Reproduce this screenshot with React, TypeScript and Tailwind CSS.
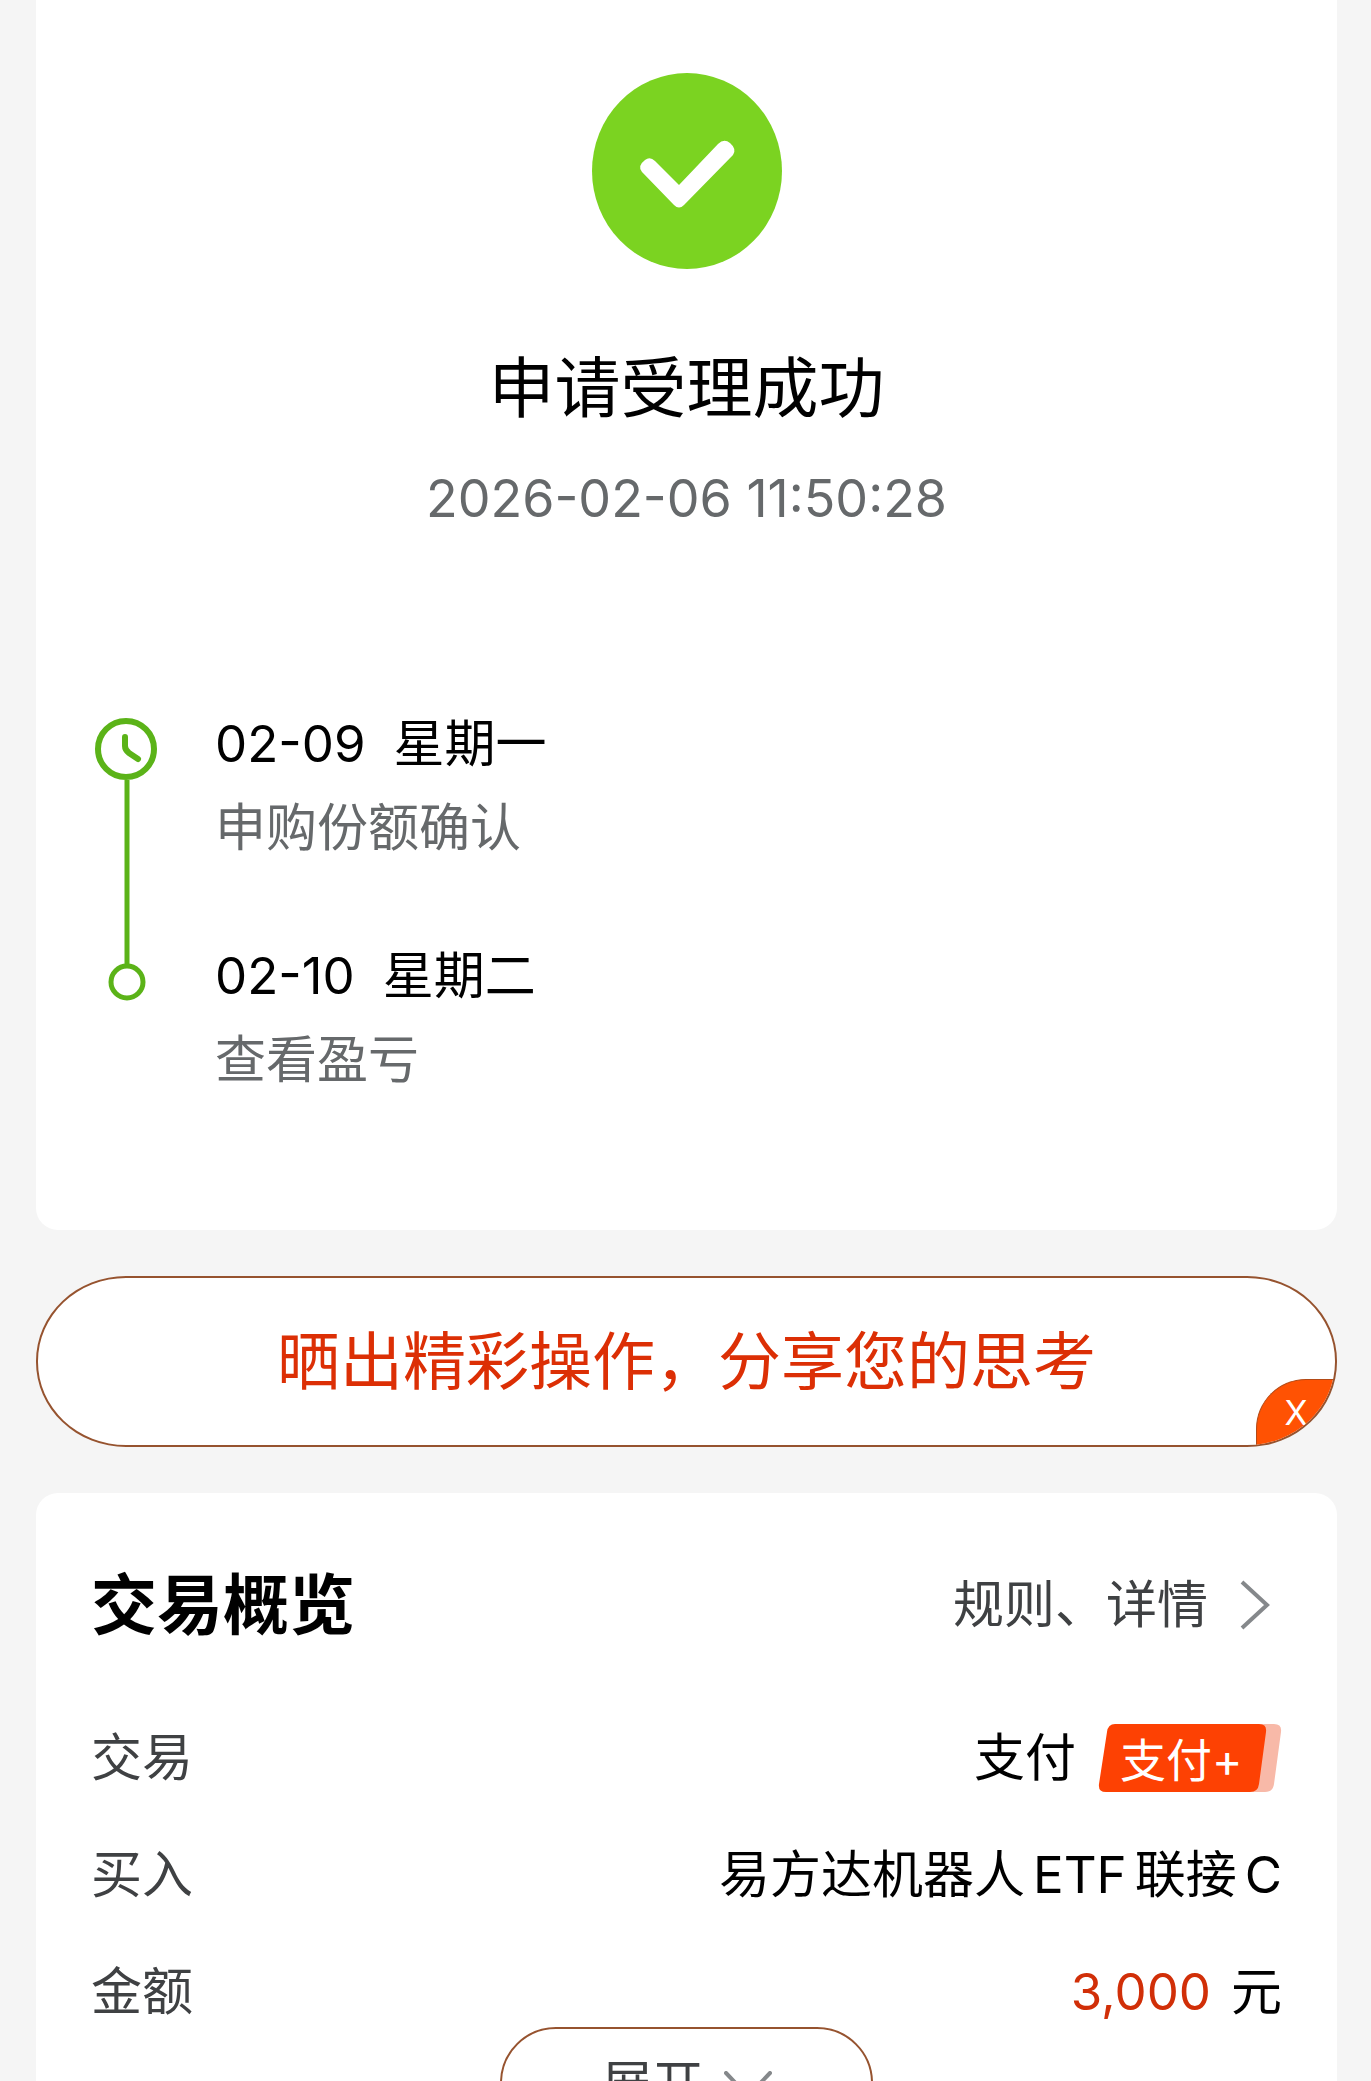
import type { ReactNode } from "react";

const STEPS = [
  { date: "02-09", weekday: "星期一", note: "申购份额确认" },
  { date: "02-10", weekday: "星期二", note: "查看盈亏" },
];

function SuccessIcon() {
  return (
    <svg width="190" height="196" viewBox="0 0 190 196" aria-hidden="true">
      <ellipse cx="95" cy="98" rx="95" ry="98" fill="#7bd321" />
      {/* check mark with flattened ends */}
      <path
        d="M53 87 Q58 83 63 88 L87 112 L126 71 Q132 65 138 70 Q145 76 141 82 L92 132 Q87 137 82 132 L50 99 Q45 93 53 87 Z"
        fill="#fff"
      />
    </svg>
  );
}

function TimelineRail() {
  return (
    <svg width="64" height="284" viewBox="0 0 64 284" fill="none" stroke="#5bb318" className="shrink-0" aria-hidden="true">
      <circle cx="32" cy="32" r="28" strokeWidth="6" />
      <path d="M31 20 V29 Q31 33 35 36 L44 42" strokeWidth="6" strokeLinecap="round" strokeLinejoin="round" />
      <path d="M33 63 V248" strokeWidth="5" />
      <circle cx="33" cy="265" r="16" strokeWidth="5" />
    </svg>
  );
}

function PayTag() {
  return (
    <span className="relative flex h-[68px] w-[184px] items-center pl-[22px] text-white">
      <svg className="absolute inset-0" width="184" height="68" viewBox="0 0 184 68" aria-hidden="true">
        <path d="M160 0 H176 Q184 0 183 8 L176 60 Q175 68 167 68 H150 Z" fill="#f8b9a8" />
        <path
          d="M17 0 H161 Q169 0 168 8 L161 60 Q160 68 152 68 H8 Q0 68 1 60 L9 8 Q10 0 17 0 Z"
          fill="#fd4103"
        />
      </svg>
      <span className="relative pt-1 text-[46px] leading-[64px]">支付+</span>
    </span>
  );
}

function Row({ label, children }: { label: string; children: ReactNode }) {
  return (
    <div className="flex h-[70px] items-center justify-between">
      <dt className="text-[#3f4143]">{label}</dt>
      <dd className="flex items-center text-black">{children}</dd>
    </div>
  );
}

export default function App() {
  return (
    <main className="h-screen overflow-hidden bg-[#f5f5f5] pr-[34px] pl-9 font-['Inter','Noto_Sans_CJK_SC',sans-serif] text-[51px] leading-[84px]">
      {/* Result */}
      <section className="rounded-b-[22px] bg-white px-[58px] pt-[73px] pb-[128px]">
        <div className="flex flex-col items-center">
          <SuccessIcon />
          <h1 className="mt-[71px] text-[66px] leading-[96px] text-black">申请受理成功</h1>
          <time className="mt-[21px] text-[52px] leading-[84px] text-[#66696b]">2026-02-06 11:50:28</time>
        </div>

        <div className="mt-[161px] flex items-start gap-[57px]">
          <div className="pt-[15px]">
            <TimelineRail />
          </div>
          <ol className="flex flex-col gap-16">
            {STEPS.map((step) => (
              <li key={step.date}>
                <p className="flex gap-7 text-black">
                  <span>{step.date}</span>
                  <span>{step.weekday}</span>
                </p>
                <p className="text-[#66696b]">{step.note}</p>
              </li>
            ))}
          </ol>
        </div>
      </section>

      {/* Share */}
      <div className="relative mt-[46px] overflow-hidden rounded-[90px/85px] border-2 border-[#96532f] bg-white">
        <button type="button" className="block w-full text-center text-[63px] leading-[167px] text-[#dc2f05]">
          晒出精彩操作，分享您的思考
        </button>
        <button
          type="button"
          aria-label="关闭"
          className="absolute right-0 bottom-0 flex h-[66px] w-[79px] items-center justify-center rounded-tl-[50px] border-t border-l border-[#b34a16] bg-[#ff5203] text-[34px] text-white"
        >
          X
        </button>
      </div>

      {/* Overview */}
      <section className="mt-[46px] rounded-t-[22px] bg-white px-[55px] pt-16">
        <header className="flex items-center justify-between">
          <h2 className="text-[66px] leading-[96px] font-bold text-black">交易概览</h2>
          <a href="#rules" className="flex items-center gap-8 pr-3 text-[#3f4143]">
            规则、详情
            <svg width="30" height="50" viewBox="0 0 30 50" fill="none" stroke="#85888b" strokeWidth="4" aria-hidden="true">
              <path d="M2 2 L27 25 L2 48" />
            </svg>
          </a>
        </header>

        <dl className="mt-[70px] flex flex-col gap-[47px] leading-[70px]">
          <Row label="交易">
            <span className="mr-[22px]">支付</span>
            <PayTag />
          </Row>
          <Row label="买入">
            <span>易方达机器人</span>
            <span className="mx-2">ETF</span>
            <span>联接</span>
            <span className="ml-2">C</span>
          </Row>
          <Row label="金额">
            <span className="mr-5 text-[#d12f08]">3,000</span>
            <span>元</span>
          </Row>
        </dl>

        <button
          type="button"
          className="mx-auto flex h-[116px] w-[373px] items-center justify-center gap-5 rounded-[56px] border-2 border-[#96532f] text-[#3f4143]"
        >
          展开
          <svg width="48" height="28" viewBox="0 0 48 28" fill="none" stroke="#85888b" strokeWidth="4" strokeLinecap="round" aria-hidden="true">
            <path d="M2 2 L24 25 L46 2" />
          </svg>
        </button>
      </section>
    </main>
  );
}
